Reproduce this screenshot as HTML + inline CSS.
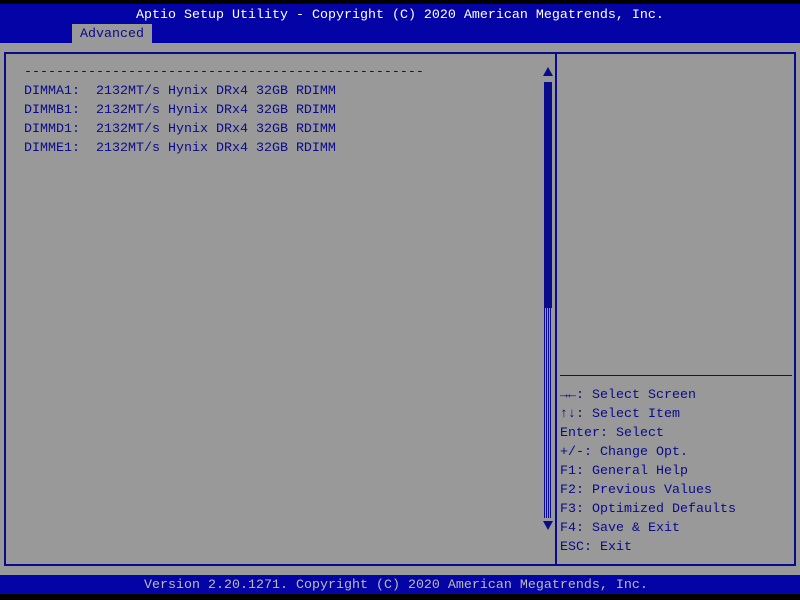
<!DOCTYPE html>
<html><head><style>
*{margin:0;padding:0;box-sizing:border-box}
body{width:800px;height:600px;background:#999;position:relative;overflow:hidden;font-family:"Liberation Mono",monospace;font-size:13.33px;color:#0a0a8c}
.a{position:absolute;white-space:pre;line-height:19px}
</style></head><body>
<div class="a" style="left:0;top:0;width:800px;height:4px;background:#000"></div>
<div class="a" style="left:0;top:4px;width:800px;height:39px;background:#0303a6"></div>
<div class="a" style="left:136px;top:6px;color:#fff">Aptio Setup Utility - Copyright (C) 2020 American Megatrends, Inc.</div>
<div class="a" style="left:72px;top:24px;width:80px;height:19px;background:#999"></div>
<div class="a" style="left:80px;top:25px">Advanced</div>
<div class="a" style="left:4px;top:52px;width:792px;height:514px;border:2px solid #0a0a8c"></div>
<div class="a" style="left:555px;top:52px;width:2px;height:514px;background:#0a0a8c"></div>
<div class="a" style="left:560px;top:375px;width:232px;height:1px;background:#0a0a8c"></div>
<div class="a" style="left:24px;top:63px">--------------------------------------------------</div>
<div class="a" style="left:24px;top:82px">DIMMA1:  2132MT/s Hynix DRx4 32GB RDIMM
DIMMB1:  2132MT/s Hynix DRx4 32GB RDIMM
DIMMD1:  2132MT/s Hynix DRx4 32GB RDIMM
DIMME1:  2132MT/s Hynix DRx4 32GB RDIMM</div>
<div class="a" style="left:543px;top:67px;width:0;height:0;border-left:5px solid transparent;border-right:5px solid transparent;border-bottom:9px solid #0a0a8c"></div>
<div class="a" style="left:544px;top:82px;width:8px;height:226px;background:#0a0a8c"></div>
<div class="a" style="left:544px;top:308px;width:8px;height:210px;background:repeating-linear-gradient(90deg,#0a0a8c 0 1px,#999 1px 2px)"></div>
<div class="a" style="left:543px;top:521px;width:0;height:0;border-left:5px solid transparent;border-right:5px solid transparent;border-top:9px solid #0a0a8c"></div>
<div class="a" style="left:560px;top:386px"><b>→←</b>: Select Screen
<b>↑↓</b>: Select Item
Enter: Select
+/-: Change Opt.
F1: General Help
F2: Previous Values
F3: Optimized Defaults
F4: Save &amp; Exit
ESC: Exit</div>
<div class="a" style="left:0;top:575px;width:800px;height:19px;background:#0303a6"></div>
<div class="a" style="left:0;top:594px;width:800px;height:6px;background:#000"></div>
<div class="a" style="left:144px;top:576px;color:#bbb">Version 2.20.1271. Copyright (C) 2020 American Megatrends, Inc.</div>
</body></html>
